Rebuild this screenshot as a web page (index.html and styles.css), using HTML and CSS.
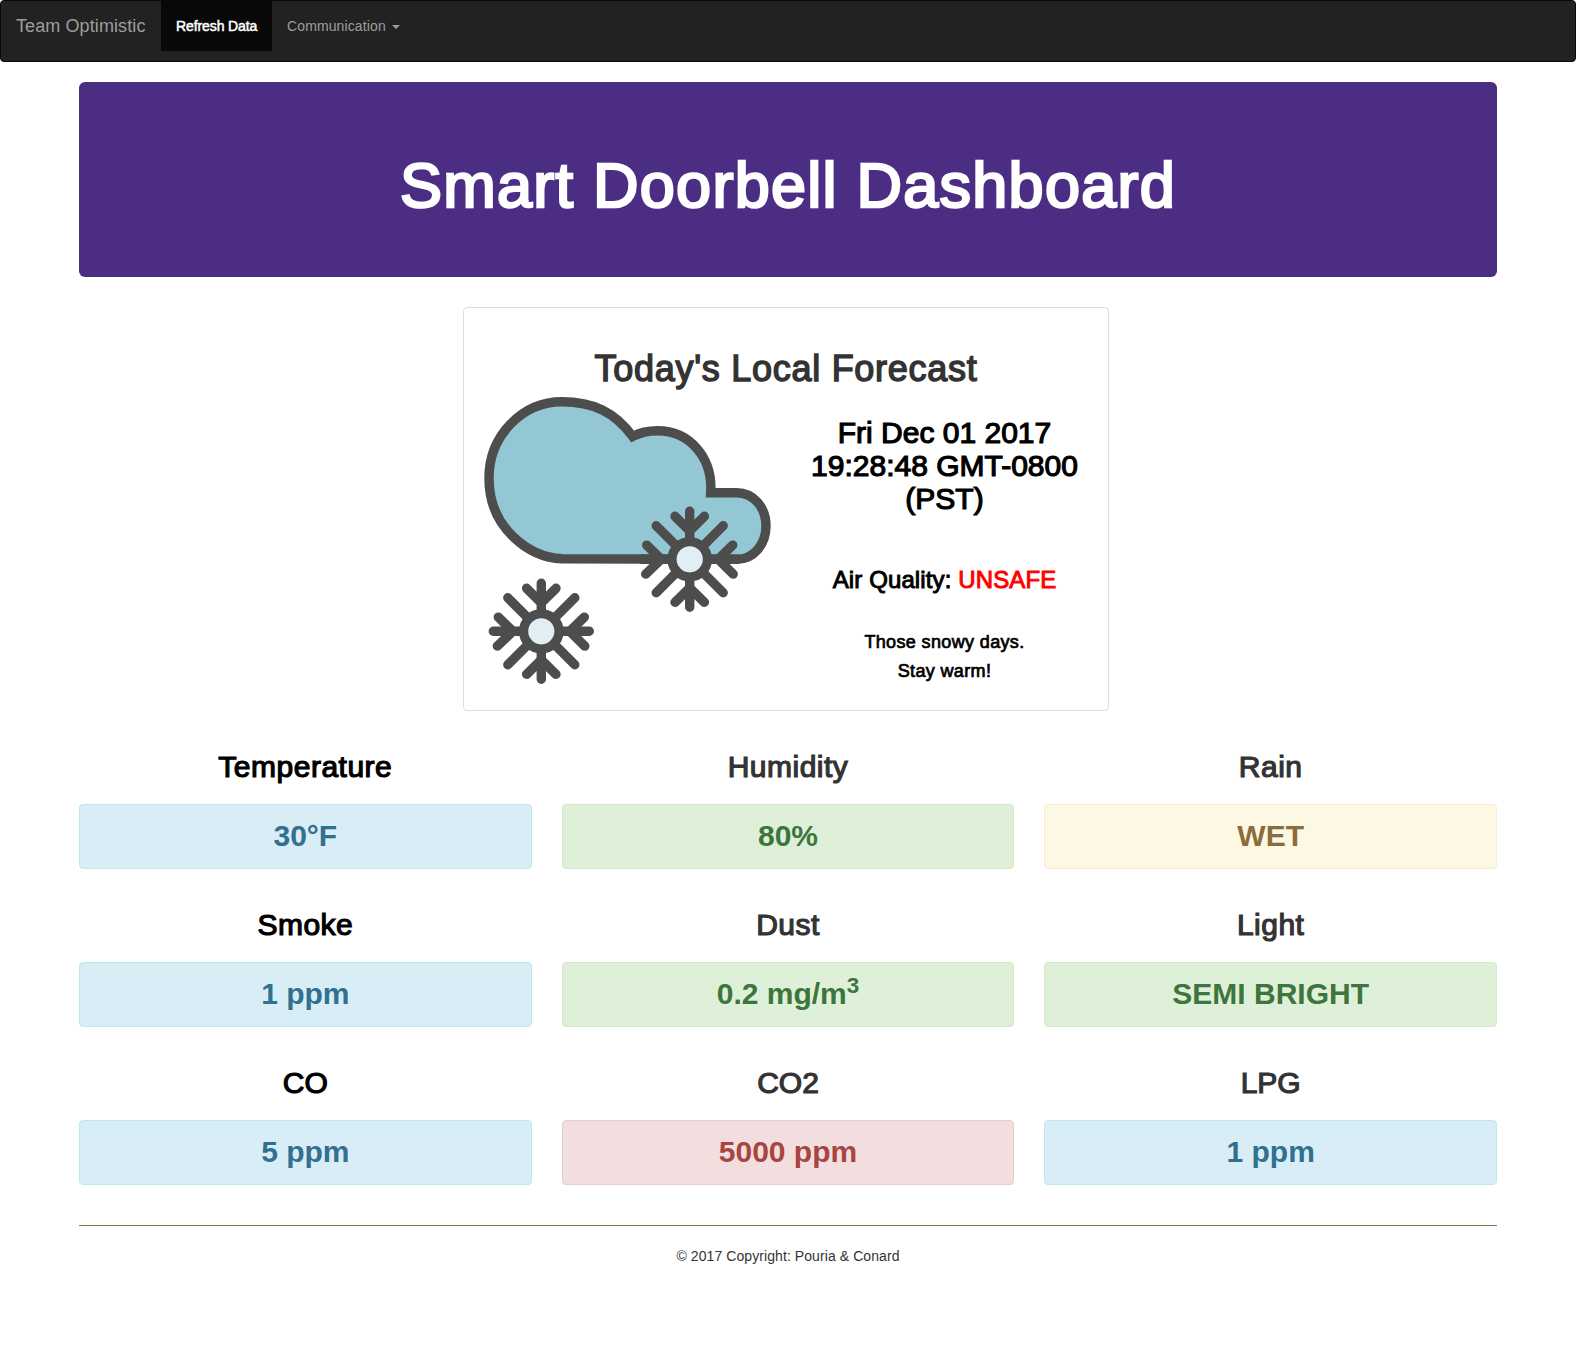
FILE: index.html
```html
<!DOCTYPE html>
<html lang="en">
<head>
<meta charset="utf-8">
<title>Smart Doorbell Dashboard</title>
<link rel="stylesheet" href="styles.css">
</head>
<body>
<nav class="navbar">
  <a class="brand">Team Optimistic</a>
  <a class="nav-link active">Refresh Data</a>
  <a class="nav-link">Communication <span class="caret"></span></a>
</nav>
<main class="container">
  <header class="jumbotron"><h1>Smart Doorbell Dashboard</h1></header>

  <section class="forecast">
    <h1 class="forecast-title">Today's Local Forecast</h1>
    <div class="forecast-body">
      <svg class="weather" viewBox="484 397 288 288" width="288" height="288" aria-hidden="true">
        <defs>
          <g id="flake">
            <g fill="none" stroke="#4d4d4d" stroke-width="9.4" stroke-linecap="round">
              <path d="M0-20V-48M0 20V48M-20 0H-48M20 0H48"/>
              <path d="M-14.7-43 0-28.5 14.7-43M-14.7 43 0 28.5 14.7 43"/>
              <path d="M-43-14.2-28.5 0-44 14.8M43-14.2 28.5 0 43.5 14.8"/>
              <path d="M-13-13-33.5-33.5M13-13 33.5-33.5M-13 13-33.5 33.5M13 13 33.5 33.5"/>
            </g>
            <circle r="17.7" fill="#e1eff4" stroke="#4d4d4d" stroke-width="9.2"/>
          </g>
        </defs>
        <path fill="#93c7d3" stroke="#4d4d4d" stroke-width="9.4" d="M562 558.8C543 558 527 550 513.5 537C497 521.500 489 503 489 478C489 436 522 401.700 562 401.700C593 401.700 615 412 632.700 436.500C640 432.500 650 430.700 657.700 430.700C689 430.700 713 457 710.700 492.700H736.700C753 492.700 766 507 766 526C766 545 753 559.300 736.700 559.300Z"/>
        <use href="#flake" x="689.700" y="559.300"/>
        <use href="#flake" x="541.300" y="631.300"/>
      </svg>
      <div class="details">
        <h2 class="date">Fri Dec 01 2017 19:28:48 GMT-0800 (PST)</h2>
        <h3 class="air">Air Quality: <span class="unsafe">UNSAFE</span></h3>
        <h4 class="note">Those snowy days.<br>Stay warm!</h4>
      </div>
    </div>
  </section>

  <section class="sensors">
    <div class="sensor"><h2 class="dark">Temperature</h2><div class="alert info">30°F</div></div>
    <div class="sensor"><h2>Humidity</h2><div class="alert success">80%</div></div>
    <div class="sensor"><h2>Rain</h2><div class="alert warning">WET</div></div>
    <div class="sensor"><h2 class="dark">Smoke</h2><div class="alert info">1 ppm</div></div>
    <div class="sensor"><h2>Dust</h2><div class="alert success">0.2 mg/m<sup>3</sup></div></div>
    <div class="sensor"><h2>Light</h2><div class="alert success">SEMI BRIGHT</div></div>
    <div class="sensor"><h2 class="dark formula">CO</h2><div class="alert info">5 ppm</div></div>
    <div class="sensor"><h2 class="formula">CO2</h2><div class="alert danger">5000 ppm</div></div>
    <div class="sensor"><h2 class="formula">LPG</h2><div class="alert info">1 ppm</div></div>
  </section>

  <footer class="footer">© 2017 Copyright: Pouria &amp; Conard</footer>
</main>
</body>
</html>
```
FILE: styles.css
```css
* { box-sizing: border-box; }

body {
  margin: 0;
  background: #fff;
  color: #333;
  font: 14px/20px "Liberation Sans", Arial, sans-serif;
}

h1, h2, h3, h4 {
  margin: 0;
  font-weight: 400;
  line-height: 1.1;
  letter-spacing: 0.02em;
  text-align: center;
  -webkit-text-stroke: 0.04em currentColor;
}

.navbar {
  display: flex;
  align-items: flex-start;
  height: 62px;
  margin-bottom: 20px;
  background: #222;
  border: 1px solid #080808;
  border-radius: 4px;
  color: #9d9d9d;
}

.brand {
  width: 160px;
  padding: 15px;
  font-size: 18px;
  letter-spacing: 0.1px;
  white-space: nowrap;
}

.nav-link {
  height: 50px;
  padding: 15px;
  letter-spacing: 0.12px;
}

.nav-link.active {
  width: 111px;
  background: #080808;
  color: #fff;
  letter-spacing: -0.1px;
  white-space: nowrap;
  -webkit-text-stroke: 0.5px currentColor;
}

.caret {
  display: inline-block;
  margin-left: 2px;
  vertical-align: middle;
  border-top: 4px solid;
  border-right: 4px solid transparent;
  border-left: 4px solid transparent;
}

.container {
  padding: 0 79px;
}

.jumbotron {
  height: 195px;
  padding-top: 69px;
  background: #4b2e83;
  border-radius: 6px;
  color: #fff;
}

.jumbotron h1 {
  font-size: 63px;
}

.forecast {
  width: 646px;
  height: 404px;
  margin: 30px 0 0 384px;
  padding: 41px 20px 0;
  border: 1px solid #ddd;
  border-radius: 4px;
}

.forecast-title {
  font-size: 36px;
}

.forecast-body {
  display: grid;
  grid-template-columns: 288px 1fr;
  column-gap: 30px;
  margin-top: 8px;
}

.weather {
  display: block;
}

.details {
  padding-top: 19px;
  color: #000;
}

.date {
  width: 285px;
  font-size: 30px;
  letter-spacing: 0;
}

.air {
  width: 285px;
  margin-top: 52px;
  font-size: 24px;
  letter-spacing: 0.12px;
}

.unsafe {
  color: #f00;
}

.note {
  width: 285px;
  margin-top: 35px;
  font-size: 18px;
  line-height: 29px;
}

.sensors {
  display: grid;
  grid-template-columns: repeat(3, 1fr);
  gap: 40px 30px;
  margin-top: 39px;
}

.sensor h2 {
  font-size: 30px;
  letter-spacing: 0.5px;
}

.sensor .formula {
  letter-spacing: 0;
}

.sensor .dark {
  color: #000;
}

.alert {
  height: 65px;
  margin-top: 21px;
  margin-bottom: -1px;
  padding: 14px 15px;
  border: 1px solid;
  border-radius: 4px;
  font-size: 30px;
  font-weight: 700;
  line-height: 33px;
  text-align: center;
}

.alert sup {
  position: relative;
  top: -0.5em;
  font-size: 75%;
  line-height: 0;
  vertical-align: baseline;
}

.info { background: #d9edf7; border-color: #bce8f1; color: #31708f; }
.success { background: #dff0d8; border-color: #d6e9c6; color: #3c763d; }
.warning { background: #fcf8e3; border-color: #faebcc; color: #8a6d3b; }
.danger { background: #f2dede; border-color: #ebccd1; color: #a94442; }

.footer {
  margin-top: 41px;
  padding-top: 20px;
  border-top: 1px solid #8a7650;
  letter-spacing: 0.08px;
  text-align: center;
}
```
